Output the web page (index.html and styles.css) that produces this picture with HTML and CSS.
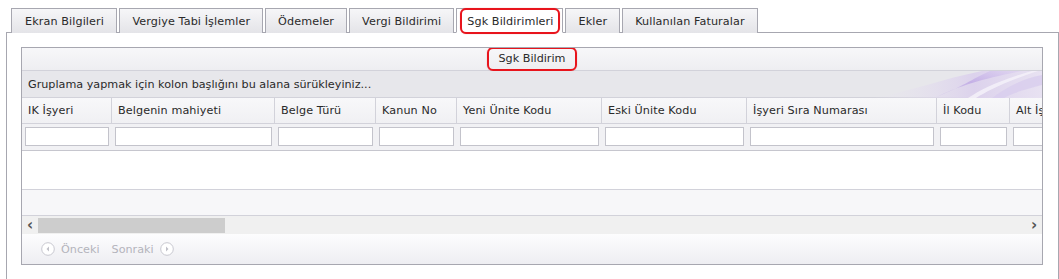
FILE: index.html
```html
<!DOCTYPE html>
<html lang="tr">
<head>
  <meta charset="UTF-8">
  <title>Sgk Bildirimleri</title>
  <link rel="stylesheet" href="styles.css">
</head>
<body>
  <div class="tabs">
    <div class="tab">Ekran Bilgileri</div>
    <div class="tab">Vergiye Tabi İşlemler</div>
    <div class="tab">Ödemeler</div>
    <div class="tab">Vergi Bildirimi</div>
    <div class="tab tab-active"><span class="mark">Sgk Bildirimleri</span></div>
    <div class="tab">Ekler</div>
    <div class="tab">Kullanılan Faturalar</div>
  </div>

  <div class="panel">
    <div class="grid">
      <div class="grid-title"><span class="mark mark-title">Sgk Bildirim</span></div>

      <div class="group-panel">
        <span>Gruplama yapmak için kolon başlığını bu alana sürükleyiniz...</span>
        <svg class="swoosh" width="170" height="27" viewBox="0 0 170 27">
          <defs>
            <linearGradient id="sw1" x1="0" y1="0" x2="1" y2="0">
              <stop offset="0" stop-color="#e9e6f0" stop-opacity="0"/>
              <stop offset="0.6" stop-color="#dcd2ec"/>
              <stop offset="1" stop-color="#e8e2f2"/>
            </linearGradient>
            <linearGradient id="sw2" x1="0" y1="1" x2="1" y2="0">
              <stop offset="0" stop-color="#c7b6e6" stop-opacity="0.2"/>
              <stop offset="0.5" stop-color="#c4b0e6"/>
              <stop offset="1" stop-color="#dcd0f0" stop-opacity="0.6"/>
            </linearGradient>
          </defs>
          <path d="M0 27 C40 20 70 8 110 0 L170 0 L170 27 Z" fill="url(#sw1)"/>
          <path d="M62 27 C90 14 110 8 150 0 L118 0 C100 8 90 16 62 27 Z" fill="url(#sw2)"/>
          <path d="M120 27 C135 16 150 8 170 4 L170 14 C155 18 140 22 132 27 Z" fill="#d8cdee" opacity="0.8"/>
          <path d="M96 27 C110 18 125 10 160 0 L166 0 C130 12 116 20 104 27 Z" fill="#f3f0f8" opacity="0.9"/>
        </svg>
      </div>

      <div class="grid-body">
        <div class="row head">
          <div class="cell c1">IK İşyeri</div>
          <div class="cell c2">Belgenin mahiyeti</div>
          <div class="cell c3">Belge Türü</div>
          <div class="cell c4">Kanun No</div>
          <div class="cell c5">Yeni Ünite Kodu</div>
          <div class="cell c6">Eski Ünite Kodu</div>
          <div class="cell c7">İşyeri Sıra Numarası</div>
          <div class="cell c8">İl Kodu</div>
          <div class="cell c9">Alt İşveren</div>
        </div>
        <div class="row filter">
          <div class="cell c1"><input type="text"></div>
          <div class="cell c2"><input type="text"></div>
          <div class="cell c3"><input type="text"></div>
          <div class="cell c4"><input type="text"></div>
          <div class="cell c5"><input type="text"></div>
          <div class="cell c6"><input type="text"></div>
          <div class="cell c7"><input type="text"></div>
          <div class="cell c8"><input type="text"></div>
          <div class="cell c9"><input type="text"></div>
        </div>
      </div>

      <div class="data-area"></div>
      <div class="footer-band"></div>

      <div class="hscroll">
        <span class="arrow">&#8249;</span>
        <div class="track"><div class="thumb"></div></div>
        <span class="arrow">&#8250;</span>
      </div>

      <div class="pager">
        <span class="pager-btn">
          <svg width="14" height="14" viewBox="0 0 14 14"><circle cx="7" cy="7" r="6.3" fill="#fff" stroke="#c8c8d0"/><path d="M8 4.5 L5.5 7 L8 9.5 Z" fill="#c0c0c8"/></svg>
          Önceki
        </span>
        <span class="pager-btn">
          Sonraki
          <svg width="14" height="14" viewBox="0 0 14 14"><circle cx="7" cy="7" r="6.3" fill="#fff" stroke="#c8c8d0"/><path d="M6 4.5 L8.5 7 L6 9.5 Z" fill="#c0c0c8"/></svg>
        </span>
      </div>
    </div>
  </div>
</body>
</html>
```

FILE: styles.css
```css
* {
  margin: 0;
  padding: 0;
  box-sizing: border-box;
}

:root {
  --border: #a7a7b0;
  --line: #d2d2da;
  --text: #2a2a2a;
  --dim: #b4b4bc;
  --red: #e8141c;
}

body {
  background: #fff;
  color: var(--text);
  font-family: Tahoma, "DejaVu Sans", Verdana, sans-serif;
  font-size: 11.2px;
  width: 1059px;
  height: 279px;
  overflow: hidden;
}

/* tabs */
.tabs {
  display: flex;
  gap: 2px;
  padding: 8px 0 0 11px;
  height: 33px;
  position: relative;
  z-index: 1;
}

.tab {
  height: 25px;
  padding: 0 12px;
  border: 1px solid var(--border);
  border-bottom: none;
  background: linear-gradient(#f6f6f8, #e4e4e8);
  display: flex;
  align-items: center;
  white-space: nowrap;
  letter-spacing: 0.1px;
}

.tab:first-child {
  padding: 0 12.5px 0 13px;
}

.tab-active {
  background: #fff;
  padding: 0 2px 0 3px;
  align-items: flex-start;
  border-bottom: 1px solid #fff;
}

.mark {
  border: 2px solid var(--red);
  border-radius: 6px;
  box-shadow: 0 0 1px rgba(232, 20, 28, 0.5);
}

.tab-active .mark {
  height: 26px;
  margin-top: -1px;
  padding: 0 5px;
  display: flex;
  align-items: center;
  background: #fff;
}

/* panel */
.panel {
  margin: -1px 0 0 6px;
  width: 1053px;
  height: 260px;
  border: 1px solid var(--border);
  border-bottom: none;
  padding: 14px 14px 0 14px;
}

.grid {
  border: 1px solid var(--border);
  width: 1022px;
  overflow: hidden;
}

.grid-title {
  height: 23px;
  background: linear-gradient(#f7f7f9, #eeeef1);
  border-bottom: 1px solid var(--line);
  display: flex;
  justify-content: center;
  align-items: center;
}

.mark-title {
  padding: 3px 10px 4px 10px;
  background: linear-gradient(#f7f7f9, #eeeef1);
}

.group-panel {
  height: 27px;
  background: #e7e7eb;
  border-bottom: 1px solid var(--line);
  display: flex;
  align-items: center;
  padding-left: 6px;
  position: relative;
}

.swoosh {
  position: absolute;
  right: 0;
  top: 0;
}

.grid-body {
  width: 1040px;
}

.row {
  display: flex;
}

.row .cell {
  flex: none;
  border-right: 1px solid var(--line);
  white-space: nowrap;
  overflow: hidden;
}

.head {
  height: 26px;
  background: linear-gradient(#f8f8fa, #f0f0f3);
  border-bottom: 1px solid var(--line);
}

.head .cell {
  padding: 0 6px;
  display: flex;
  align-items: center;
  letter-spacing: 0.1px;
}

.filter {
  height: 27px;
  background: #f1f1f4;
  border-bottom: 1px solid #c6c6ce;
}

.filter .cell {
  padding: 3px 2px 0 3px;
  border-right-color: transparent;
}

.filter input {
  width: 100%;
  height: 19px;
  border: 1px solid #c3c3cb;
  background: #fff;
  display: block;
}

.c1 { width: 90px; }
.c2 { width: 163px; }
.c3 { width: 101px; }
.c4 { width: 81px; }
.c5 { width: 145px; }
.c6 { width: 145px; }
.c7 { width: 190px; }
.c8 { width: 73px; }
.c9 { width: 52px; border-right: none; }

.data-area {
  height: 39px;
  background: #fff;
  border-bottom: 1px solid var(--line);
}

.footer-band {
  height: 26px;
  background: #f7f7f9;
  border-bottom: 1px solid var(--line);
}

.hscroll {
  height: 18px;
  background: #f0f0f0;
  display: flex;
  align-items: center;
}

.arrow {
  width: 16px;
  text-align: center;
  font-family: "DejaVu Sans", sans-serif;
  font-size: 15px;
  font-weight: bold;
  color: #555;
  line-height: 16px;
}

.track {
  flex: 1;
  height: 15px;
  display: flex;
  align-items: center;
}

.thumb {
  width: 187px;
  height: 15px;
  background: #cdcdcd;
}

.pager {
  height: 30px;
  background: linear-gradient(#fdfdfe, #eeeef2);
  display: flex;
  align-items: center;
  gap: 12px;
  padding-left: 19px;
  color: var(--dim);
}

.pager-btn {
  display: flex;
  align-items: center;
  gap: 6px;
}
```
